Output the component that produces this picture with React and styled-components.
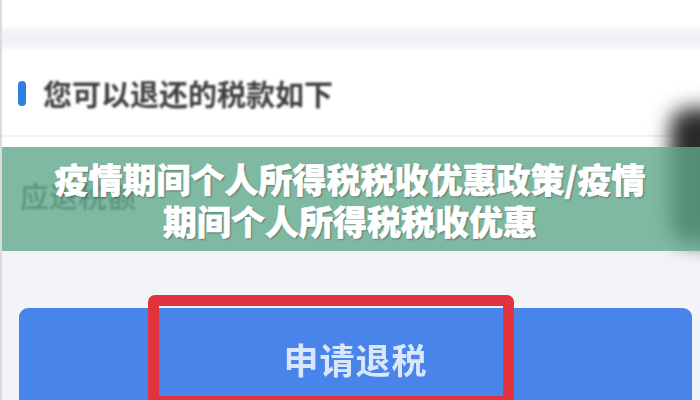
import React from "react";
import styled, { createGlobalStyle } from "styled-components";

const Global = createGlobalStyle`
  html, body { margin: 0; padding: 0; background: #ffffff; }
  body { font-family: "Noto Sans CJK SC", "Noto Sans", sans-serif; }
`;

const Page = styled.div`
  position: relative;
  width: 700px;
  height: 400px;
  overflow: hidden;
  box-sizing: border-box;
  border-left: 2px solid #dcdcdf;
  background: #f3f4f8;
  display: flex;
  flex-direction: column;
`;

const TopSpace = styled.div`
  height: 27px;
  background: #ffffff;
  flex: none;
`;

const Band = styled.div`
  height: 23px;
  flex: none;
  background: linear-gradient(#f8f9fc, #eff1f7 40%, #f0f2f8 70%, #fafbfd);
`;

const Card = styled.div`
  background: #ffffff;
  flex: none;
  height: ${(p) => p.$h}px;
  box-sizing: border-box;
  padding: ${(p) => p.$pt}px 0 0 ${(p) => p.$pl}px;
  border-bottom: ${(p) => (p.$line ? "2px solid #f1f2f5" : "none")};
`;

const TitleRow = styled.div`
  display: flex;
  align-items: center;
  gap: 17px;
`;

const Marker = styled.span`
  width: 8px;
  height: 25px;
  border-radius: 4px;
  background: #2f7ee0;
  filter: blur(0.5px);
`;

const Title = styled.span`
  font-size: 29px;
  line-height: 29px;
  font-weight: 700;
  color: #404040;
  filter: blur(0.8px);
`;

const Label = styled.span`
  font-size: 29px;
  line-height: 29px;
  font-weight: 500;
  color: #454545;
  filter: blur(1.2px);
`;

const ButtonArea = styled.div`
  flex: 1;
  padding: 57px 8px 0 17px;
`;

const ApplyButton = styled.div`
  height: 100px;
  border-radius: 9px;
  background: #4884ea;
  display: flex;
  align-items: center;
  justify-content: center;
  font-size: 35px;
  font-weight: 700;
  letter-spacing: 1px;
  color: #dae6fa;
  filter: blur(0.6px);
`;

const Shadow = styled.div`
  position: absolute;
  right: -30px;
  top: 108px;
  width: 60px;
  height: 135px;
  border-radius: 20px;
  background: #2a2a2a;
  filter: blur(10px);
`;

const Banner = styled.div`
  position: absolute;
  left: -2px;
  right: 0;
  top: 147px;
  height: 104px;
  background: rgba(96, 167, 139, 0.8);
  display: flex;
  flex-direction: column;
  align-items: center;
  justify-content: center;
  padding-top: 2px;
  box-sizing: border-box;
`;

const BannerLine = styled.div`
  font-family: "Noto Sans CJK SC", sans-serif;
  font-size: 34px;
  line-height: 42px;
  font-weight: 900;
  color: #ffffff;
  text-shadow: 1px 1px 2px rgba(0, 0, 0, 0.45);
  -webkit-text-stroke: 0.6px #ffffff;
  white-space: nowrap;
`;

const Highlight = styled.div`
  position: absolute;
  left: 146px;
  top: 295px;
  width: 366px;
  height: 112px;
  box-sizing: border-box;
  border: 11px solid #e1323d;
  border-radius: 7px;
  filter: blur(0.4px);
`;

export default function App() {
  return (
    <>
      <Global />
      <Page>
        <TopSpace />
        <Band />
        <Card $h={87} $pt={29} $pl={16} $line>
          <TitleRow>
            <Marker />
            <Title>您可以退还的税款如下</Title>
          </TitleRow>
        </Card>
        <Card $h={114} $pt={44} $pl={18}>
          <Label>应退税额</Label>
        </Card>
        <ButtonArea>
          <ApplyButton>申请退税</ApplyButton>
        </ButtonArea>
        <Shadow />
        <Banner>
          <BannerLine>疫情期间个人所得税税收优惠政策/疫情</BannerLine>
          <BannerLine>期间个人所得税税收优惠</BannerLine>
        </Banner>
        <Highlight />
      </Page>
    </>
  );
}
